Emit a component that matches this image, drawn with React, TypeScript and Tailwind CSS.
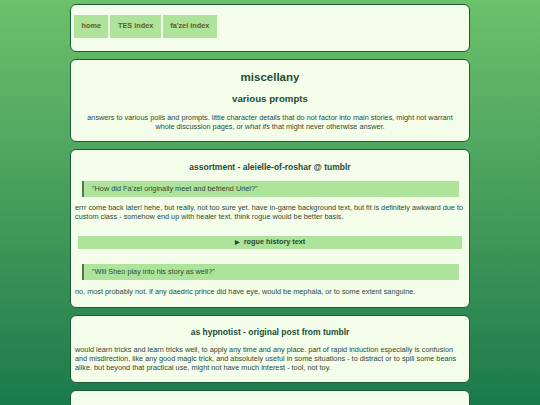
import React from "react";

const nav = ["home", "TES index", "fa'zel index"];

function Panel({ children, className = "" }: { children: React.ReactNode; className?: string }) {
  return (
    <div className={`rounded-[6px] border border-[#1c5a3a] bg-[#f3fde9] ${className}`}>
      {children}
    </div>
  );
}

function Quote({ children }: { children: React.ReactNode }) {
  return (
    <div className="ml-[7px] mr-[6px] flex h-[16px] items-center border-l-[2px] border-[#4f7a4f] bg-[#aee39b] pl-[8px] text-[7.3px] text-[#2d4a37]">
      {children}
    </div>
  );
}

export default function App() {
  return (
    <div
      className="min-h-screen bg-fixed bg-gradient-to-b from-[#6cc16b] to-[#187a4b] pt-[4px] pb-4"
      style={{ fontFamily: '"Liberation Sans", Arial, sans-serif' }}
    >
      <div className="mx-auto flex w-[400px] flex-col gap-[7px]">
        {/* NAV */}
        <Panel className="h-[48px] px-[3px] pt-[10px]">
          <div className="flex gap-[2px]">
            {nav.map((n) => (
              <a
                key={n}
                className="flex h-[23px] items-center bg-[#aee39b] px-[7.5px] text-[7.3px] font-bold text-[#6b5622]"
              >
                {n}
              </a>
            ))}
          </div>
        </Panel>

        {/* INTRO */}
        <Panel className="px-3 pt-[10px] pb-[10px] text-center">
          <h1 className="text-[11.5px] leading-[15px] font-bold text-[#1f4c36]">miscellany</h1>
          <h2 className="mt-[7px] text-[9.7px] leading-[13px] font-bold text-[#1f4c36]">various prompts</h2>
          <p className="mt-[8px] text-[7.3px] leading-[9px] text-[#2d4a37]">
            answers to various polls and prompts. little character details that do not factor into main stories, might not warrant
            whole discussion pages, or <i>what ifs</i> that might never otherwise answer.
          </p>
        </Panel>

        {/* ASSORTMENT */}
        <Panel className="px-[4px] pt-[11px] pb-[11px]">
          <h3 className="text-center text-[8.5px] leading-[12px] font-bold text-[#1f4c36]">
            assortment - aleielle-of-roshar @ tumblr
          </h3>
          <div className="mt-[8px]">
            <Quote>"How did Fa'zel originally meet and befriend Uriel?"</Quote>
          </div>
          <p className="mt-[6px] text-[7.3px] leading-[9px] text-[#2d4a37]">
            errr come back later! hehe, but really, not too sure yet. have in-game background text, but fit is definitely awkward due
            to custom class - somehow end up with healer text. think rogue would be better basis.
          </p>
          <div className="mx-[3px] mt-[15px] flex h-[13px] items-center justify-center bg-[#aee39b] text-[7.3px] font-bold text-[#1f4c36]">
            <span className="mr-[4px] text-[6px]">▶</span>rogue history text
          </div>
          <div className="mt-[15px]">
            <Quote>"Will Sheo play into his story as well?"</Quote>
          </div>
          <p className="mt-[7px] text-[7.3px] leading-[9px] text-[#2d4a37]">
            no, most probably not. if any daedric prince did have eye, would be mephala, or to some extent sanguine.
          </p>
        </Panel>

        {/* HYPNOTIST */}
        <Panel className="px-[4px] pt-[10px] pb-[10px]">
          <h3 className="text-center text-[8.5px] leading-[12px] font-bold text-[#1f4c36]">
            as hypnotist - original post from tumblr
          </h3>
          <p className="mt-[7px] text-[7.3px] leading-[9px] text-[#2d4a37]">
            would learn tricks and learn tricks well, to apply any time and any place. part of rapid induction especially is confusion
            and misdirection, like any good magic trick, and absolutely useful in some situations - to distract or to spill some beans
            alike. but beyond that practical use, might not have much interest - tool, not toy.
          </p>
        </Panel>

        <Panel className="px-[4px] pt-[14px] pb-[9px]">
          <h3 className="text-center text-[8.5px] leading-[12px] font-bold text-[#1f4c36]">as healer</h3>
          <p className="mt-[7px] text-[7.3px] leading-[9px] text-[#2d4a37]">more to come.</p>
        </Panel>
      </div>
    </div>
  );
}
